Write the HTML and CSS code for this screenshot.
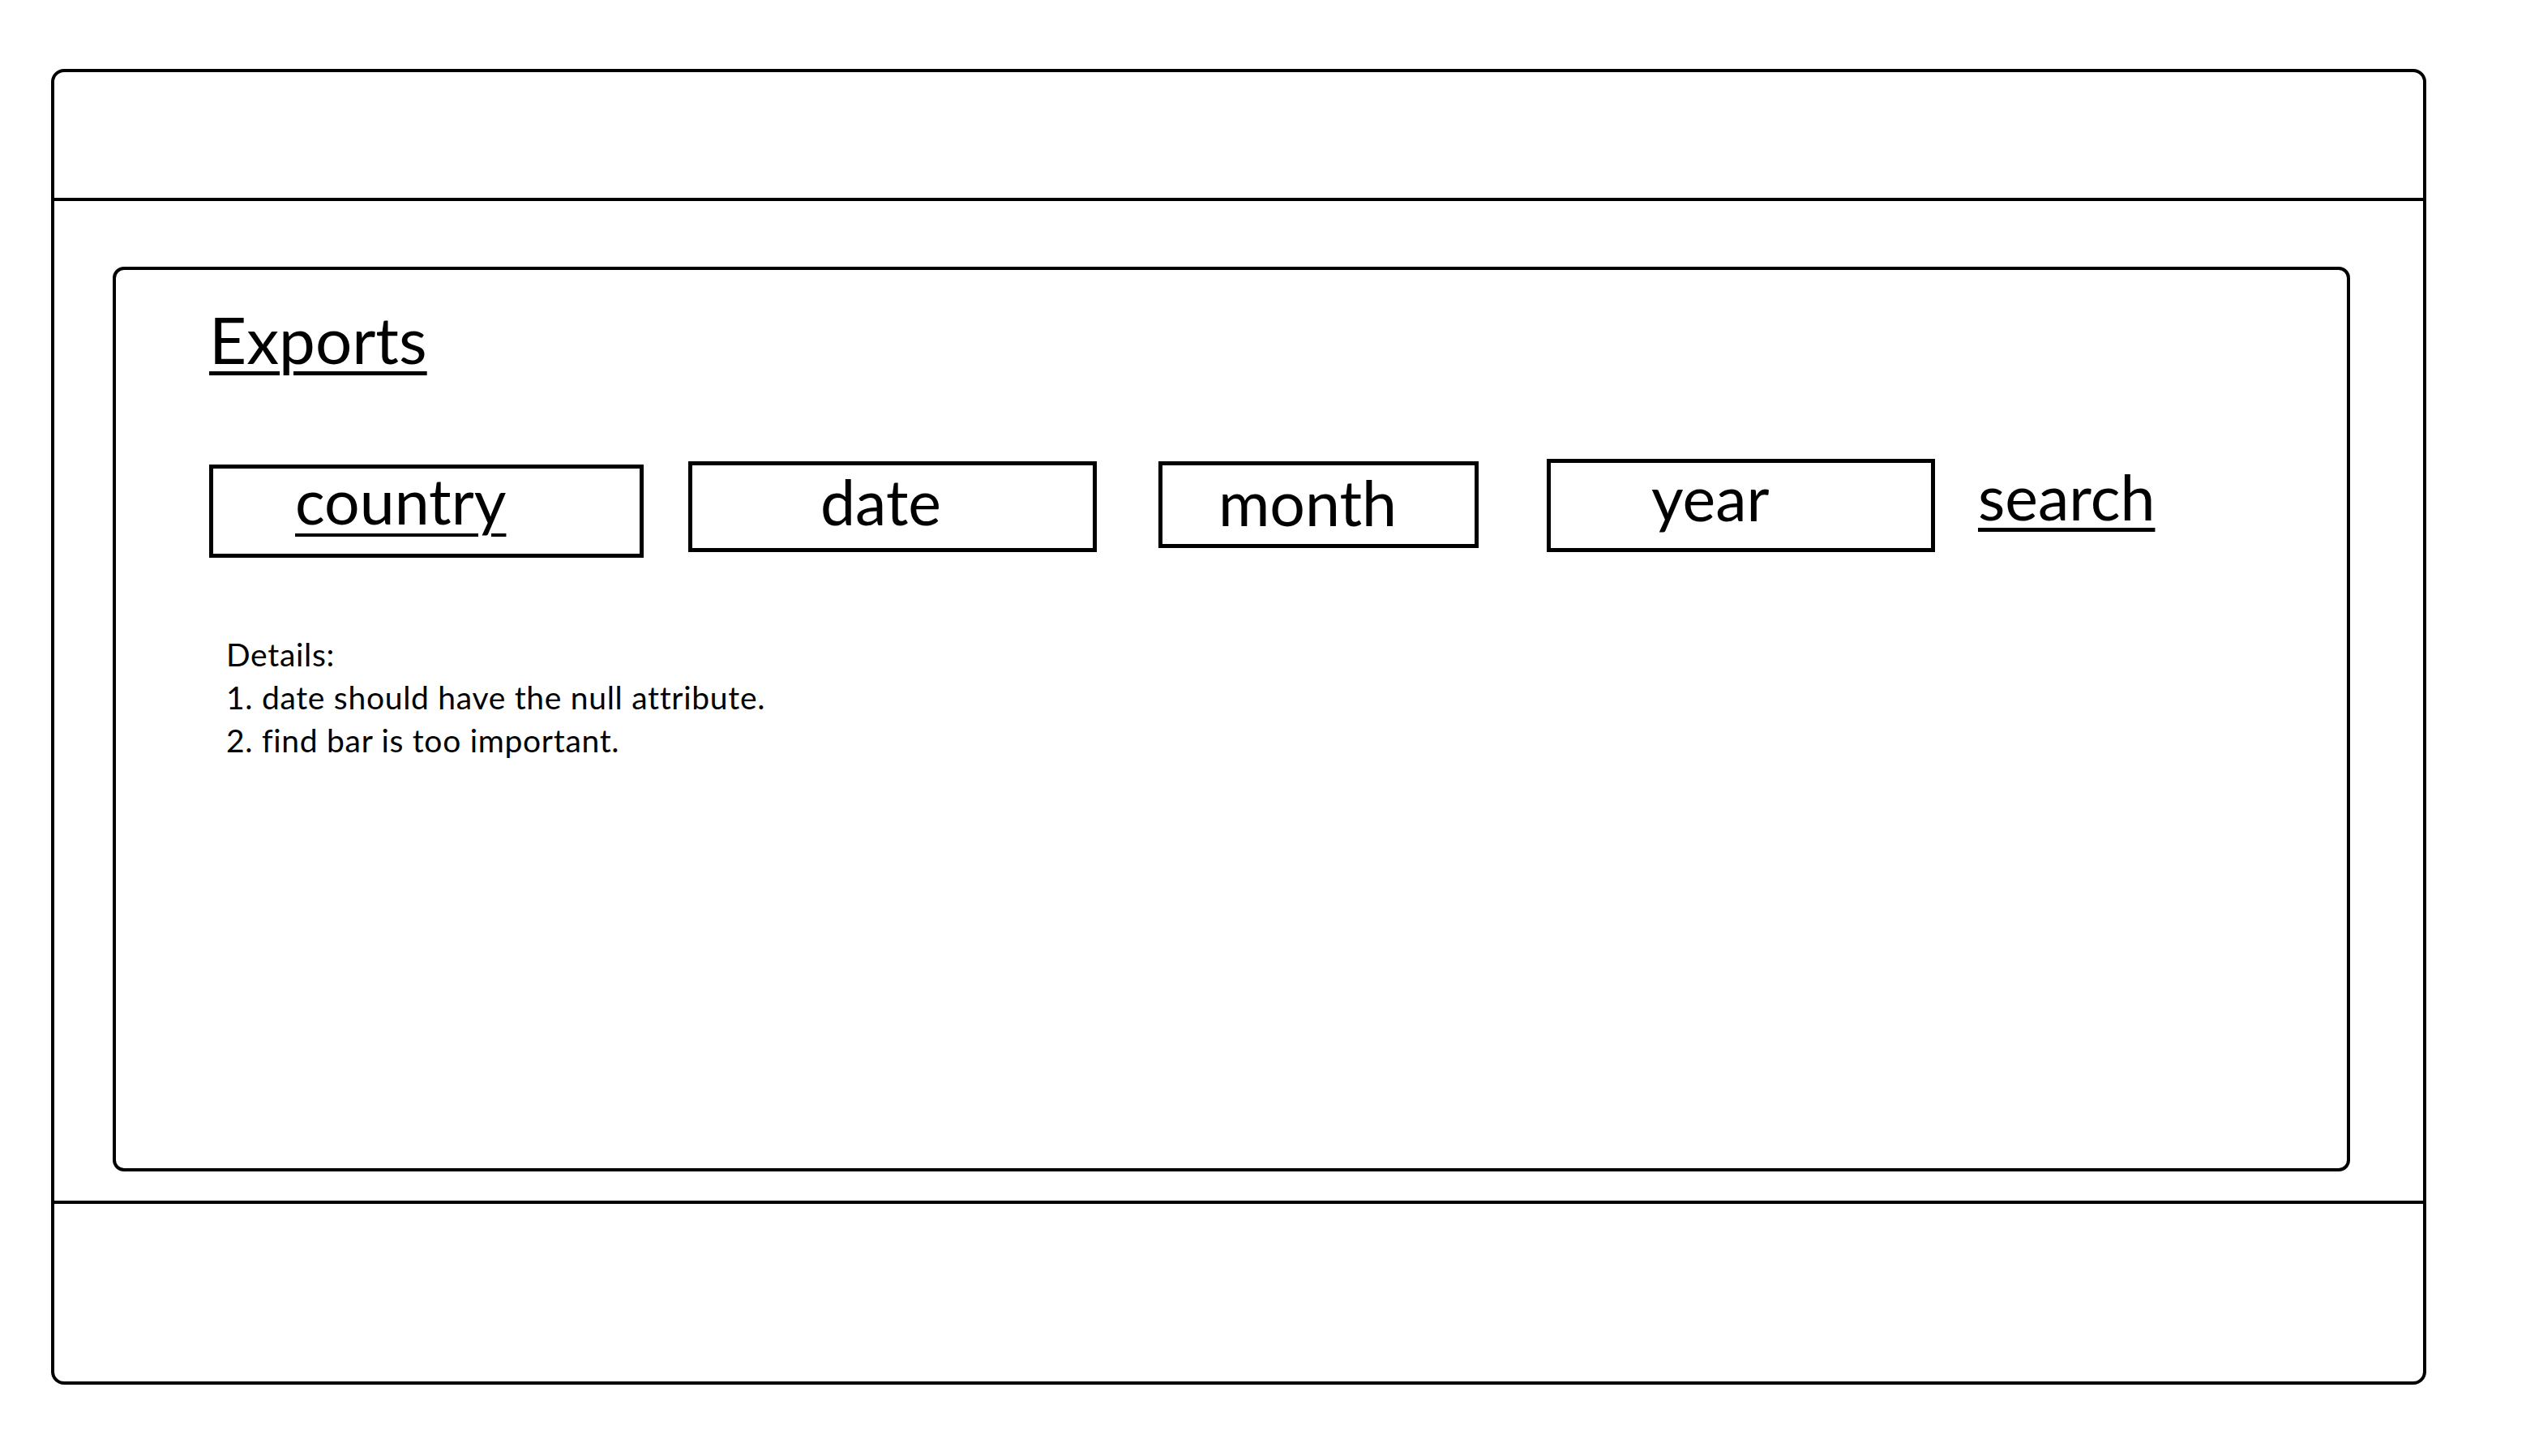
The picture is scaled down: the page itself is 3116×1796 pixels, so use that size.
FILE: index.html
```html
<!DOCTYPE html>
<html lang="en">
<head>
<meta charset="utf-8">
<title>Exports wireframe</title>
<link rel="stylesheet" href="styles.css">
</head>
<body>
<div class="frame">
  <header class="frame-header"></header>
  <main class="frame-main">
    <section class="panel">
      <h1 class="title">Exports</h1>
      <div class="filters">
        <div class="field field-country"><span class="u">country</span></div>
        <div class="field field-date">date</div>
        <div class="field field-month">month</div>
        <div class="field field-year">year</div>
        <div class="search"><span class="u">search</span></div>
      </div>
      <div class="details">
        <div>Details:</div>
        <div>1. date should have the null attribute.</div>
        <div>2. find bar is too important.</div>
      </div>
    </section>
  </main>
  <footer class="frame-footer"></footer>
</div>
</body>
</html>
```

FILE: styles.css
```css
html, body {
  margin: 0;
  padding: 0;
  background: #fff;
}

body {
  font-family: "Lato", "Open Sans", sans-serif;
  color: #000;
}

.frame {
  box-sizing: border-box;
  width: 2930px;
  height: 1623px;
  margin: 85px 0 0 63px;
  border: 4px solid #000;
  border-radius: 16px;
  display: flex;
  flex-direction: column;
}

.frame-header {
  height: 155px;
  border-bottom: 4px solid #000;
  flex: none;
}

.frame-main {
  flex: none;
  padding: 81px 90px 36px 72px;
}

.frame-footer {
  flex: 1;
  border-top: 4px solid #000;
}

.panel {
  box-sizing: border-box;
  height: 1116px;
  border: 4px solid #000;
  border-radius: 14px;
  padding: 37px 0 0 115px;
}

.title {
  margin: 0;
  font-size: 80px;
  font-weight: 400;
  line-height: 96px;
  text-decoration: underline;
  text-decoration-thickness: 5px;
  text-underline-offset: 9px;
}

.filters {
  display: flex;
  align-items: flex-start;
  margin-top: 100px;
}

.field {
  box-sizing: border-box;
  border: 5px solid #000;
  font-size: 77px;
  line-height: 60px;
  white-space: nowrap;
  flex: none;
}

.u {
  text-decoration: underline;
  text-decoration-thickness: 4px;
  text-underline-offset: 11px;
}

.field-country {
  width: 536px;
  height: 115px;
  margin-top: 7px;
  padding: 9px 0 0 101px;
}

.field-date {
  width: 504px;
  height: 112px;
  margin-top: 3px;
  margin-left: 55px;
  padding: 14px 0 0 158px;
}

.field-month {
  width: 395px;
  height: 107px;
  margin-top: 3px;
  margin-left: 76px;
  padding: 15px 0 0 69px;
}

.field-year {
  width: 479px;
  height: 115px;
  margin-left: 84px;
  padding: 12px 0 0 124px;
}

.search {
  font-size: 77px;
  line-height: 60px;
  margin-top: 16px;
  margin-left: 53px;
}

.search .u {
  text-decoration-thickness: 5px;
  text-underline-offset: 9px;
}

.details {
  margin: 93px 0 0 21px;
  font-size: 39px;
  letter-spacing: 0.7px;
  line-height: 53px;
}
```
